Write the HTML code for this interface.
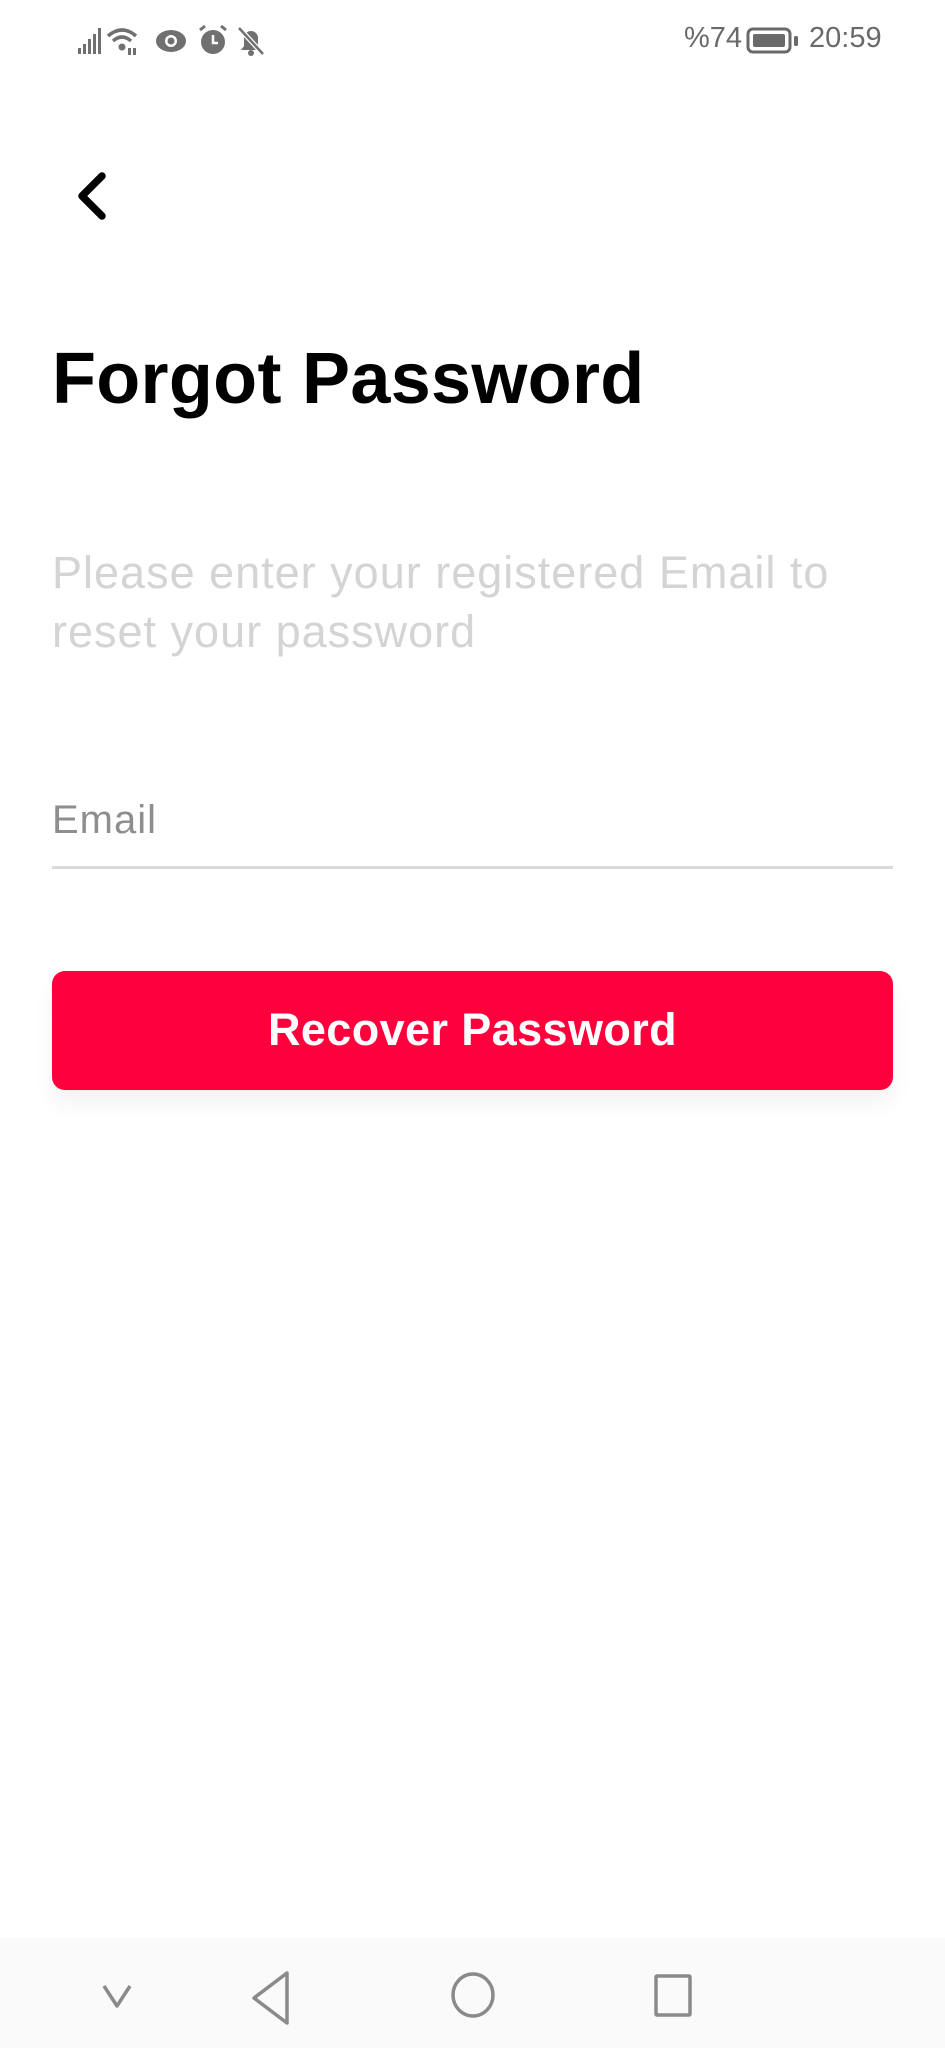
<!DOCTYPE html>
<html><head><meta charset="utf-8"><style>
body{margin:0;width:945px;height:2048px;background:#fff;position:relative;overflow:hidden;font-family:"Liberation Sans",sans-serif}
.a{position:absolute}
</style></head><body>
<!-- status bar -->
<svg class="a" style="left:76px;top:24px" width="190" height="34" viewBox="0 0 190 34" fill="#707070">
<rect x="2" y="24" width="3" height="6"/><rect x="7" y="20" width="3" height="10"/><rect x="12" y="15" width="3" height="15"/><rect x="17" y="10" width="3" height="20"/><rect x="22" y="4" width="3" height="26"/>
<path d="M32 12 Q46 0 60 12" stroke="#707070" stroke-width="3.5" fill="none"/><path d="M37 17 Q46 9 55 17" stroke="#707070" stroke-width="3.5" fill="none"/><circle cx="46" cy="23" r="3.5"/><rect x="52" y="24" width="3" height="7"/><rect x="57" y="24" width="3" height="7"/>
<ellipse cx="95" cy="17" rx="15" ry="11"/><circle cx="95" cy="17" r="6" fill="#fff"/><circle cx="95" cy="17" r="3.5"/>
<circle cx="137" cy="18" r="12"/><path d="M137 11v8h5" stroke="#fff" stroke-width="2.5" fill="none"/><path d="M124 6l5-4M150 6l-5-4" stroke="#707070" stroke-width="3"/>
<path d="M165 26h20l-3-4v-8a7 7 0 0 0-14 0v8z"/><circle cx="175" cy="29" r="3"/><path d="M163 4l24 26" stroke="#fff" stroke-width="5"/><path d="M163 4l24 26" stroke="#707070" stroke-width="2.5"/>
</svg>
<div class="a" style="left:684px;top:22px;font-size:29px;color:#6a6a6a">%74</div>
<svg class="a" style="left:746px;top:27px" width="54" height="28"><rect x="2" y="2" width="42" height="23" rx="5" fill="none" stroke="#6a6a6a" stroke-width="3"/><rect x="7" y="7" width="32" height="13" rx="2" fill="#6a6a6a"/><rect x="48" y="9" width="4" height="10" rx="1.5" fill="#6a6a6a"/></svg>
<div class="a" style="left:809px;top:22px;font-size:29px;color:#6a6a6a">20:59</div>
<!-- back -->
<svg class="a" style="left:70px;top:170px" width="40" height="52"><path d="M32 6L12 26l20 20" stroke="#000" stroke-width="7.5" fill="none" stroke-linecap="round" stroke-linejoin="round"/></svg>
<div class="a" style="left:52px;top:338px;font-size:72px;font-weight:bold;color:#000;letter-spacing:0.3px">Forgot Password</div>
<div class="a" style="left:52px;top:543px;font-size:45px;line-height:59px;color:#d5d3d3;width:880px;letter-spacing:1px;white-space:nowrap">Please enter your registered Email to<br>reset your password</div>
<div class="a" style="left:52px;top:798px;font-size:40px;color:#8e8e8e;letter-spacing:1px">Email</div>
<div class="a" style="left:52px;top:866px;width:841px;height:3px;background:#dadada"></div>
<div class="a" style="left:52px;top:971px;width:841px;height:119px;border-radius:13px;background:#ff003c;box-shadow:0 14px 22px rgba(0,0,0,0.05);color:#fff;font-weight:bold;font-size:45px;text-align:center;line-height:117px;letter-spacing:0.4px">Recover Password</div>
<!-- nav -->
<div class="a" style="left:0;top:1938px;width:945px;height:110px;background:#fafafa"></div>
<svg class="a" style="left:0;top:1938px" width="945" height="110" fill="none" stroke="#8a8a8a" stroke-width="3.5" stroke-linejoin="round">
<path d="M104 48l13 20 13-20"/>
<path d="M287 35v50l-33-25z"/>
<ellipse cx="473" cy="57" rx="20" ry="21"/>
<rect x="656" y="38" width="34" height="39" rx="1"/>
</svg>
</body></html>
